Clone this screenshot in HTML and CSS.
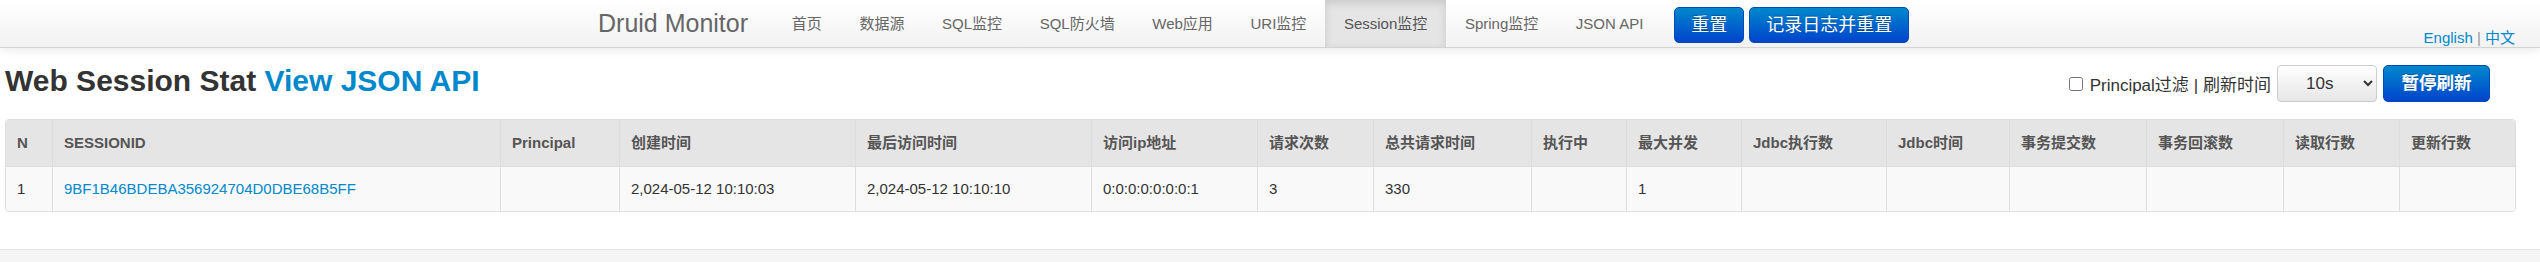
FILE: index.html
```html
<!DOCTYPE html>
<html lang="zh-CN">
<head>
    <meta charset="UTF-8">
    <meta name="viewport" content="width=device-width, initial-scale=1.0">
    <title>Druid Monitor</title>
    <link rel="stylesheet" href="styles.css">
</head>
<body>
    <div class="navbar">
        <div class="navbar-inner">
            <div class="container">
                <a class="brand" href="#">Druid Monitor</a>
                <ul class="nav">
                    <li><a href="#">首页</a></li>
                    <li><a href="#">数据源</a></li>
                    <li><a href="#">SQL监控</a></li>
                    <li><a href="#">SQL防火墙</a></li>
                    <li><a href="#">Web应用</a></li>
                    <li><a href="#">URI监控</a></li>
                    <li class="active"><a href="#">Session监控</a></li>
                    <li><a href="#">Spring监控</a></li>
                    <li><a href="#">JSON API</a></li>
                </ul>
                <div class="nav-btns">
                    <a class="btn btn-primary" href="#">重置</a>
                    <a class="btn btn-primary" href="#">记录日志并重置</a>
                </div>
            </div>
            <div class="lang"><a href="#">English</a> <span class="sep">|</span> <a href="#">中文</a></div>
        </div>
    </div>

    <div class="main">
        <div class="title-row">
            <h3>Web Session Stat <a href="#">View JSON API</a></h3>
            <div class="tools">
                <label class="filter"><input type="checkbox">Principal过滤</label>
                <span class="refresh-label">| 刷新时间</span>
                <select class="refresh-select">
                    <option>5s</option>
                    <option selected>10s</option>
                    <option>20s</option>
                    <option>30s</option>
                    <option>60s</option>
                </select>
                <a class="btn btn-primary btn-suspend" href="#">暂停刷新</a>
            </div>
        </div>

        <table class="data-table">
            <colgroup>
                <col style="width:46px">
                <col style="width:448px">
                <col style="width:119px">
                <col style="width:236px">
                <col style="width:236px">
                <col style="width:166px">
                <col style="width:116px">
                <col style="width:158px">
                <col style="width:95px">
                <col style="width:115px">
                <col style="width:145px">
                <col style="width:123px">
                <col style="width:137px">
                <col style="width:137px">
                <col style="width:116px">
                <col style="width:116px">
            </colgroup>
            <thead>
                <tr>
                    <th>N</th>
                    <th>SESSIONID</th>
                    <th>Principal</th>
                    <th>创建时间</th>
                    <th>最后访问时间</th>
                    <th>访问ip地址</th>
                    <th>请求次数</th>
                    <th>总共请求时间</th>
                    <th>执行中</th>
                    <th>最大并发</th>
                    <th>Jdbc执行数</th>
                    <th>Jdbc时间</th>
                    <th>事务提交数</th>
                    <th>事务回滚数</th>
                    <th>读取行数</th>
                    <th>更新行数</th>
                </tr>
            </thead>
            <tbody>
                <tr>
                    <td>1</td>
                    <td><a href="#">9BF1B46BDEBA356924704D0DBE68B5FF</a></td>
                    <td></td>
                    <td>2,024-05-12 10:10:03</td>
                    <td>2,024-05-12 10:10:10</td>
                    <td>0:0:0:0:0:0:0:1</td>
                    <td>3</td>
                    <td>330</td>
                    <td></td>
                    <td>1</td>
                    <td></td>
                    <td></td>
                    <td></td>
                    <td></td>
                    <td></td>
                    <td></td>
                </tr>
            </tbody>
        </table>
    </div>

    <div class="footer"></div>
</body>
</html>
```

FILE: styles.css
```css
body{
    margin: 0;
    font-family: "Liberation Sans", "Noto Sans CJK SC", sans-serif;
    font-size: 15px;
    color: #333;
    background: #fff;
}

a{
    color: #0088cc;
    text-decoration: none;
}

/* top bar */
.navbar-inner{
    display: grid;
    grid-template-columns: 1fr 1364px 1fr;
    height: 47px;
    background: linear-gradient(to bottom, #ffffff, #f2f2f2);
    border-bottom: 1px solid #d4d4d4;
    box-shadow: 0 1px 10px rgba(0,0,0,.1);
}

.container{
    grid-column: 2;
    display: flex;
    align-items: stretch;
}

.brand{
    color: #666;
    font-size: 25px;
    line-height: 47px;
    padding: 0 25px 0 10px;
}

.nav{
    display: flex;
    list-style: none;
    margin: 0;
    padding: 0;
}

.nav a{
    display: block;
    color: #666;
    font-size: 15px;
    line-height: 47px;
    padding: 0 18.8px;
}

.nav .active a{
    background-color: #e5e5e5;
    color: #555;
    box-shadow: inset 0 3px 8px rgba(0,0,0,.125);
}

.nav-btns{
    display: flex;
    gap: 5px;
    margin-left: 12px;
    padding-top: 7px;
}

.btn{
    display: inline-block;
    border-radius: 5px;
    text-align: center;
}

.btn-primary{
    color: #fff;
    background: linear-gradient(to bottom, #0088cc, #0044cc);
    border: 1px solid #0049b8;
    text-shadow: 0 -1px 0 rgba(0,0,0,.25);
}

.nav-btns .btn{
    font-size: 18px;
    line-height: 34px;
    height: 34px;
    padding: 0 16px;
}

.lang{
    grid-column: 3;
    justify-self: end;
    align-self: end;
    font-size: 15px;
    line-height: 16px;
    margin: 0 25px 1px 0;
}

.lang .sep{
    color: #999;
}

/* page */
.main{
    padding: 0 26px 0 5px;
}

.title-row{
    display: flex;
    justify-content: space-between;
    align-items: flex-start;
    margin-top: 13px;
}

.title-row h3{
    margin: 0;
    font-size: 30px;
    line-height: 40px;
    font-weight: bold;
    color: #333;
}

.tools{
    display: flex;
    align-items: center;
    margin: 4px 24px 0 0;
    font-size: 17px;
    color: #333;
}

.filter{
    display: flex;
    align-items: center;
}

.filter input{
    width: 14px;
    height: 14px;
    margin: 0 7px 0 0;
}

.refresh-label{
    margin-left: 5px;
}

.refresh-select{
    width: 100px;
    height: 37px;
    margin-left: 6px;
    padding: 0 0 0 24px;
    font-family: "Liberation Sans", sans-serif;
    font-size: 17px;
    color: #333;
    background: linear-gradient(to bottom, #ffffff, #e6e6e6);
    border: 1px solid #cccccc;
    border-radius: 4px;
}

.btn-suspend{
    margin-left: 6px;
    width: 105px;
    font-size: 17.5px;
    font-weight: bold;
    line-height: 35px;
}

/* table */
.data-table{
    width: 100%;
    table-layout: fixed;
    border-collapse: separate;
    border-spacing: 0;
    margin-top: 17px;
    background-color: #fff;
    border: 1px solid #dddddd;
    border-radius: 4px;
}

.data-table th,
.data-table td{
    text-align: left;
    line-height: 20px;
    padding: 13px 11px;
    border-left: 1px solid #dddddd;
    white-space: nowrap;
    overflow: hidden;
}

.data-table th:first-child,
.data-table td:first-child{
    border-left: none;
}

.data-table th{
    background-color: #e5e5e5;
    color: #555;
    font-weight: bold;
}

.data-table thead th:first-child{
    border-top-left-radius: 4px;
}

.data-table thead th:last-child{
    border-top-right-radius: 4px;
}

.data-table td{
    background-color: #f9f9f9;
    border-top: 1px solid #dddddd;
    padding: 12px 11px;
    color: #333;
}

.data-table tbody td:first-child{
    border-bottom-left-radius: 4px;
}

.data-table tbody td:last-child{
    border-bottom-right-radius: 4px;
}

.footer{
    margin-top: 37px;
    height: 40px;
    background-color: #f5f5f5;
    border-top: 1px solid #e5e5e5;
}
```
